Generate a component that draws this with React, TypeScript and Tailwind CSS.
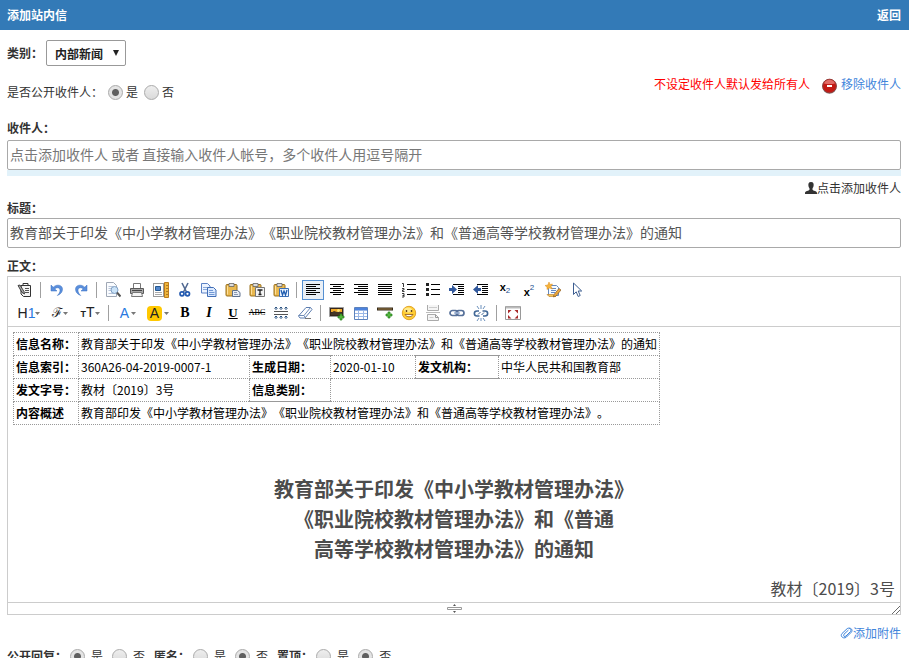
import { useState, type ReactNode } from "react";

interface ToolButtonProps {
  title: string;
  children: ReactNode;
  active?: boolean;
  width?: string;
}

function ToolButton({ title, children, active, width = "w-[22px]" }: ToolButtonProps) {
  return (
    <button
      type="button"
      title={title}
      aria-label={title}
      className={`mx-px flex h-5 shrink-0 items-center justify-center border ${width} ${
        active ? "border-[#5690d2] bg-[#e9eff6]" : "border-transparent hover:border-[#5690d2] hover:bg-[#e9eff6]"
      }`}
    >
      {children}
    </button>
  );
}

function Separator() {
  return <span className="mr-1 ml-[3px] h-4 w-px shrink-0 bg-[#a0a0a0]" />;
}

function Icon({ children }: { children: ReactNode }) {
  return (
    <svg viewBox="0 0 16 16" className="h-4 w-4 shrink-0" fill="none">
      {children}
    </svg>
  );
}

function Caret() {
  return (
    <svg viewBox="0 0 5 3" className="h-[3px] w-[5px] shrink-0" fill="#777">
      <path d="M0 0h5L2.500 3z" />
    </svg>
  );
}

function Lines({ rows }: { rows: number[][] }) {
  return (
    <Icon>
      {rows.map(([x, y, w]) => (
        <rect key={y} x={x} y={y} width={w} height="1" fill="#000" shapeRendering="crispEdges" />
      ))}
    </Icon>
  );
}

const alignLeft = [[1, 2, 14], [1, 4, 10], [1, 6, 14], [1, 8, 10], [1, 10, 14], [1, 12, 10]];
const alignCenter = [[1, 2, 14], [4, 4, 8], [1, 6, 14], [4, 8, 8], [1, 10, 14], [4, 12, 8]];
const alignRight = [[1, 2, 14], [5, 4, 10], [1, 6, 14], [5, 8, 10], [1, 10, 14], [5, 12, 10]];
const alignFull = [[1, 2, 14], [1, 4, 14], [1, 6, 14], [1, 8, 14], [1, 10, 14], [1, 12, 14]];

function UndoIcon() {
  return (
    <Icon>
      <path d="M2 3v6h6L5.800 6.900C8 5 11 5.500 11 8.300c0 2-1 3.700-2.700 5.200C11.500 12.500 13.500 10 13.500 7.200 13.500 2.800 7.800 1.800 4.200 5.200z" fill="#5b8fdc" stroke="#376fc0" strokeWidth=".5" />
    </Icon>
  );
}

function PasteIcon({ children }: { children?: ReactNode }) {
  return (
    <Icon>
      <rect x="1" y="2.500" width="11" height="11.500" rx="1" fill="#e9b84f" stroke="#9a711d" />
      <path d="M2.500 4v8.500" stroke="#ffe09a" />
      <path d="M4 1.500h5v3H4z" fill="#ddd" stroke="#666" strokeWidth=".8" />
      {children}
    </Icon>
  );
}

function IndentIcon({ out }: { out?: boolean }) {
  return (
    <Icon>
      <path
        d="M4 2.500h11M9 4.500h6M9 6.500h6M9 8.500h6M9 10.500h6M4 12.500h11"
        stroke="#000"
        shapeRendering="crispEdges"
      />
      <path d={out ? "M8 6H5V3L0 7.500 5 12V9h3z" : "M0 6h3V3l5 4.500L3 12V9H0z"} fill="#31589c" />
    </Icon>
  );
}

function PlusMark({ x, y }: { x: number; y: number }) {
  return (
    <path
      d={`M${x + 2} ${y}h2v2h2v2h-2v2h-2v-2h-2v-2h2z`}
      fill="#55b83e"
      stroke="#23801a"
      strokeWidth=".7"
    />
  );
}

function Toolbar() {
  return (
    <div className="flex flex-col gap-[3px] border-b border-[#ccc] px-[5px] py-[3px]" role="toolbar">
      <div className="flex items-center">
        <ToolButton title="HTML代码">
          <Icon>
            <path d="M4 3.500h9.500v11h-7L4 12z" fill="#f5f5f5" stroke="#333" />
            <path d="M6 3V1.500h5V3" stroke="#333" />
            <path d="M8 6.500h4M8 8.500h4M8 10.500h4" stroke="#555" />
            <path d="M1 3.500L3 3l4 6.500.500 2.500L5 10.500z" fill="#aaa" stroke="#222" strokeWidth=".8" />
          </Icon>
        </ToolButton>
        <Separator />
        <ToolButton title="后退">
          <UndoIcon />
        </ToolButton>
        <ToolButton title="前进">
          <span className="-scale-x-100">
            <UndoIcon />
          </span>
        </ToolButton>
        <Separator />
        <ToolButton title="预览">
          <Icon>
            <path d="M1.500.500h7l3 3v11h-10z" fill="#fafcff" stroke="#a0a8b5" />
            <path d="M3.500 4.500h5M3.500 6.500h3M3.500 8.500h3M3.500 11.500h5" stroke="#b9c5d8" />
            <circle cx="9.500" cy="8" r="3.500" fill="#cbe3f8" stroke="#7f9fc4" />
            <path d="M12 10.500l3.500 4" stroke="#555" strokeWidth="2" />
          </Icon>
        </ToolButton>
        <ToolButton title="打印">
          <Icon>
            <path d="M4.500 6V1.500h7V6" fill="#fff" stroke="#777" />
            <path d="M1.500 6.500h13v5h-13z" fill="#a8a8a8" stroke="#5a5a5a" />
            <path d="M3 8.500h10" stroke="#444" />
            <path d="M3.500 10.500h9l1 4h-11z" fill="#f4f4f4" stroke="#777" />
          </Icon>
        </ToolButton>
        <ToolButton title="插入模板">
          <Icon>
            <path d="M.500 1.500h10v13H.500z" fill="#fff" stroke="#333" strokeDasharray="1 1" />
            <path d="M2.500 4.500h5v4h-5z" fill="#5185cb" stroke="#24588f" />
            <path d="M2 10.500h7M2 12.500h7" stroke="#aaa" />
            <path d="M11.500.500h4v15h-4z" fill="#eeb53c" stroke="#bd7c1c" />
            <path d="M13 3.500h2M13 6.500h2M13 9.500h2M13 12.500h2" stroke="#b07a20" />
          </Icon>
        </ToolButton>
        <ToolButton title="剪切">
          <Icon>
            <path d="M5 1l4.500 9M11 1L6.500 10" stroke="#526a92" strokeWidth="1.600" />
            <circle cx="5" cy="11.800" r="2" stroke="#245ab0" strokeWidth="1.700" />
            <circle cx="10.500" cy="11.800" r="2" stroke="#245ab0" strokeWidth="1.700" />
          </Icon>
        </ToolButton>
        <ToolButton title="复制">
          <Icon>
            <path d="M.500 1.500h6l2.500 2.500v7H.500z" fill="#edf4ff" stroke="#5c82c5" />
            <path d="M2 5.500h5M2 7.500h5" stroke="#8babdc" />
            <path d="M6.500 5.500h6L15 8v6.500H6.500z" fill="#dceaff" stroke="#416eb6" />
            <path d="M8 8.500h4M8 10.500h5.500M8 12.500h5.500" stroke="#7299d4" />
          </Icon>
        </ToolButton>
        <ToolButton title="粘贴">
          <PasteIcon>
            <path d="M7.500 8.500h5l2.500 2v4H7.500z" fill="#e8edf5" stroke="#5f718d" />
            <path d="M9 10.500h3M9 12.500h4" stroke="#8b9ab2" />
          </PasteIcon>
        </ToolButton>
        <ToolButton title="粘贴为无格式文本">
          <PasteIcon>
            <path d="M6.500 5.500h9v9h-9z" fill="#f4f4f4" stroke="#777" />
            <path d="M8.500 8h5M11 8v5M9.500 12.500h3" stroke="#222" strokeWidth="1.300" />
          </PasteIcon>
        </ToolButton>
        <ToolButton title="从Word粘贴">
          <PasteIcon>
            <path d="M6.500 6.500h9v8h-9z" fill="#eaf3ff" stroke="#3c70b5" />
            <path d="M8 8l1.500 5L11 9l1.500 4L14 8" stroke="#1f5daf" strokeWidth="1.300" />
          </PasteIcon>
        </ToolButton>
        <Separator />
        <ToolButton title="左对齐" active>
          <Lines rows={alignLeft} />
        </ToolButton>
        <ToolButton title="居中">
          <Lines rows={alignCenter} />
        </ToolButton>
        <ToolButton title="右对齐">
          <Lines rows={alignRight} />
        </ToolButton>
        <ToolButton title="两端对齐">
          <Lines rows={alignFull} />
        </ToolButton>
        <ToolButton title="编号">
          <Icon>
            <path d="M6 2.500h9M6 7.500h9M6 12.500h9" stroke="#000" shapeRendering="crispEdges" />
            <path
              d="M1 1.500h1.500V5M1 6.500h2v1.500H1.500V9.500H3.500M1 11.500h2v3.500H1M1.500 13.500H3"
              stroke="#222"
              strokeWidth=".9"
            />
          </Icon>
        </ToolButton>
        <ToolButton title="项目符号">
          <Icon>
            <path d="M6 2.500h9M6 7.500h9M6 12.500h9" stroke="#000" shapeRendering="crispEdges" />
            <path d="M1 1h3v3H1zM1 6h3v3H1zM1 11h3v3H1z" fill="#222" />
          </Icon>
        </ToolButton>
        <ToolButton title="增加缩进">
          <IndentIcon />
        </ToolButton>
        <ToolButton title="减少缩进">
          <IndentIcon out />
        </ToolButton>
        <ToolButton title="下标">
          <span className="flex pb-0.5 font-[Liberation_Sans] text-[11px] leading-3 font-bold text-black">
            x<span className="pt-1 text-[8px] font-normal text-[#24508f]">2</span>
          </span>
        </ToolButton>
        <ToolButton title="上标">
          <span className="flex items-end font-[Liberation_Sans] text-[11px] leading-3 font-bold text-black">
            x<span className="pb-1 text-[8px] font-normal text-[#24508f]">2</span>
          </span>
        </ToolButton>
        <ToolButton title="一键排版">
          <Icon>
            <path d="M3.500 3.500h8l2 2v8h-10z" fill="#f7fbff" stroke="#6589bd" />
            <path d="M6 6.500h5M6 8.500h5M6 10.500h4" stroke="#658ac4" />
            <path d="M4 0l1 2.500L7.500 2 6 4.500 7.500 7 4.500 6 2 7.500 2 5 0 3.500 2.800 3z" fill="#f6b33b" stroke="#dc8f20" strokeWidth=".5" />
            <path d="M2 12.500h6l3 2H4z" fill="#f5c85a" stroke="#b97724" strokeWidth=".6" />
            <path d="M14 6.500l2 1.500-5 6-2.500 1 .5-2.500z" fill="#eda83b" stroke="#8a5b23" strokeWidth=".7" />
          </Icon>
        </ToolButton>
        <ToolButton title="全选">
          <Icon>
            <path d="M4.500 1v11.500l2.700-2.700 2 4.700 2-1-2-4.500h3.500z" fill="#fff" stroke="#3d5e91" />
          </Icon>
        </ToolButton>
      </div>

      <div className="flex items-center">
        <ToolButton title="段落" width="w-[30px]">
          <span className="font-[Liberation_Sans] text-sm leading-4 text-[#222]">
            H<span className="text-[#2878df]">1</span>
          </span>
          <Caret />
        </ToolButton>
        <ToolButton title="字体" width="w-7">
          <span className="font-[DejaVu_Serif] text-[13px] leading-4 text-[#222]">ℱ</span>
          <Caret />
        </ToolButton>
        <ToolButton title="文字大小" width="w-7">
          <span className="font-[Liberation_Sans] text-sm leading-4 text-[#222]">
            <span className="text-[9px] font-bold">T</span>T
          </span>
          <Caret />
        </ToolButton>
        <Separator />
        <ToolButton title="文字颜色" width="w-7">
          <span className="mr-0.5 font-[Liberation_Sans] text-sm leading-4 text-[#2878df]">A</span>
          <Caret />
        </ToolButton>
        <ToolButton title="文字背景" width="w-7">
          <span className="mr-0.5 h-[15px] w-[15px] shrink-0 rounded-sm bg-[#ffc800] text-center font-[Liberation_Sans] text-sm leading-[15px] text-[#222]">
            A
          </span>
          <Caret />
        </ToolButton>
        <ToolButton title="粗体">
          <span className="font-[Liberation_Serif] text-sm leading-4 font-black text-black">B</span>
        </ToolButton>
        <ToolButton title="斜体">
          <span className="font-[Liberation_Serif] text-sm leading-4 font-bold text-black italic">I</span>
        </ToolButton>
        <ToolButton title="下划线">
          <span className="font-[Liberation_Serif] text-[13px] leading-4 font-bold text-black underline">U</span>
        </ToolButton>
        <ToolButton title="删除线">
          <span className="font-[Liberation_Serif] text-[8px] leading-4 text-black line-through">ABC</span>
        </ToolButton>
        <ToolButton title="行距">
          <Icon>
            <path d="M1 6.500h14M1 9.500h14" stroke="#555" shapeRendering="crispEdges" />
            <path d="M3 2v3M8 2v3M13 2v3M3 11v3M8 11v3M13 11v3" stroke="#2b5382" />
            <path d="M1.500 3.500L3 2l1.500 1.500M6.500 3.500L8 2l1.500 1.500M11.500 3.500L13 2l1.500 1.500M1.500 12.500L3 11l1.500 1.500M6.500 12.500L8 11l1.500 1.500M11.500 12.500L13 11l1.500 1.500" stroke="#2b5382" />
          </Icon>
        </ToolButton>
        <ToolButton title="删除格式">
          <Icon>
            <path d="M9 2.500h4.500l1.500 2-7 8.500H3L1.500 11z" fill="#fff" stroke="#5c7db0" />
            <path d="M1.500 10.500h5.500L8.500 13M7 10.500l6.500-8" stroke="#6f8db8" />
            <path d="M8 13.500h6" stroke="#777" />
          </Icon>
        </ToolButton>
        <Separator />
        <ToolButton title="图片">
          <Icon>
            <path d="M.500 2.500h14v9H.500z" fill="#35261d" stroke="#9c9c9c" />
            <path d="M2 4h11v3H2z" fill="#f1aa2b" />
            <path d="M2 8l3-2 3 1 2-1 3 2v2H2z" fill="#453526" />
            <circle cx="9.500" cy="5.500" r="1.500" fill="#ffe576" />
            <PlusMark x={9} y={9} />
          </Icon>
        </ToolButton>
        <ToolButton title="表格">
          <Icon>
            <path d="M1.500 2.500h13v12h-13z" fill="#fff" stroke="#5c82bc" />
            <path d="M2 3h12v2H2z" fill="#4c83dd" />
            <path d="M2 5.500h12M2 8.500h12M2 11.500h12M5.500 5v9M10.500 5v9" stroke="#9bb8e7" />
          </Icon>
        </ToolButton>
        <ToolButton title="插入横线">
          <Icon>
            <path d="M0 2.500h16v3H0z" fill="#352918" />
            <path d="M1 4h14" stroke="#a3824a" />
            <PlusMark x={9} y={7} />
          </Icon>
        </ToolButton>
        <ToolButton title="插入表情">
          <Icon>
            <circle cx="8" cy="8" r="6.700" fill="#ffcd33" stroke="#e3a52a" />
            <ellipse cx="7" cy="5" rx="4" ry="2.500" fill="#ffea8c" />
            <path d="M5.500 5v2M10.500 5v2" stroke="#67451a" strokeWidth="1.400" />
            <path d="M4 9.500c1.500 3 6.500 3 8 0z" fill="#fff" stroke="#8e571c" strokeWidth=".8" />
          </Icon>
        </ToolButton>
        <ToolButton title="插入分页符">
          <Icon>
            <path d="M2.500 0v5.500h11V0M2.500 15.500v-6h8l3 3v3z" fill="#f5f5f5" stroke="#aaa" />
            <path d="M4 2.500h8M4.500 12.500h4" stroke="#ccc" />
            <path d="M1 7.500h14" stroke="#bbb" />
            <path d="M10.500 9.500v3h3" stroke="#999" />
          </Icon>
        </ToolButton>
        <ToolButton title="超级链接">
          <Icon>
            <rect x="1" y="5.500" width="8" height="5" rx="2.500" stroke="#567099" strokeWidth="1.700" />
            <rect x="7" y="5.500" width="8" height="5" rx="2.500" stroke="#567099" strokeWidth="1.700" />
            <path d="M5 8h6" stroke="#9fb4d6" strokeWidth="1.500" />
          </Icon>
        </ToolButton>
        <ToolButton title="取消超级链接">
          <Icon>
            <path d="M6 6H4C.500 6 .500 11 4 11h2.500M9.500 6H12c3.500 0 3.500 5 0 5h-2" stroke="#416796" strokeWidth="1.600" />
            <path d="M5 9.500L7.500 7M8.500 10L11 7.500" stroke="#416796" />
            <path d="M4 1l2 3M8 0v4M12 1l-2 3M4 16l2-3M8 16v-3M12 16l-2-3" stroke="#4675ab" strokeWidth=".8" />
          </Icon>
        </ToolButton>
        <Separator />
        <ToolButton title="全屏显示">
          <Icon>
            <path d="M.500 1.500h15v13H.500z" fill="#fff" stroke="#999" />
            <path d="M1 2.500h14" stroke="#bbb" strokeWidth="2" />
            <path d="M3 5h3.500L3 8.500zM13 5v3.500L9.500 5zM3 13.500V10l3.500 3.500zM13 13.500H9.500L13 10z" fill="#a82b2b" />
          </Icon>
        </ToolButton>
      </div>
    </div>
  );
}

const cell = "h-[23px] border border-dotted border-[#999] px-0.5 py-0 text-left";

function InfoTable() {
  return (
    <table className="w-[647px] table-fixed border-collapse text-xs leading-5 text-black">
      <colgroup>
        <col className="w-[65px]" />
        <col className="w-[171px]" />
        <col className="w-[81px]" />
        <col className="w-[85px]" />
        <col className="w-[83px]" />
        <col />
      </colgroup>
      <tbody>
        <tr>
          <th className={cell}>信息名称：</th>
          <td className={`${cell} whitespace-nowrap`} colSpan={5}>
            教育部关于印发《中小学教材管理办法》《职业院校教材管理办法》和《普通高等学校教材管理办法》的通知
          </td>
        </tr>
        <tr>
          <th className={cell}>信息索引：</th>
          <td className={cell}>360A26-04-2019-0007-1</td>
          <th className={`${cell} [border-top-style:solid]`}>生成日期：</th>
          <td className={cell}>2020-01-10</td>
          <th className={`${cell} [border-top-style:solid] [border-bottom-style:solid]`}>发文机构：</th>
          <td className={cell}>中华人民共和国教育部</td>
        </tr>
        <tr>
          <th className={cell}>发文字号：</th>
          <td className={cell}>教材〔2019〕3号</td>
          <th className={`${cell} [border-bottom-style:solid]`}>信息类别：</th>
          <td className={cell} colSpan={3}></td>
        </tr>
        <tr>
          <th className={cell}>内容概述</th>
          <td className={cell} colSpan={5}>
            教育部印发《中小学教材管理办法》《职业院校教材管理办法》和《普通高等学校教材管理办法》。
          </td>
        </tr>
      </tbody>
    </table>
  );
}

interface YesNoProps {
  name: string;
  label: string;
  value: boolean;
  onChange: (value: boolean) => void;
  compact?: boolean;
}

function YesNo({ name, label, value, onChange, compact }: YesNoProps) {
  const radio =
    "h-[15px] w-[15px] shrink-0 appearance-none rounded-full border border-[#aaa] bg-linear-to-b from-[#eee] to-[#dadada] checked:bg-[radial-gradient(circle,#606060_3px,#e4e4e4_4px)]";
  const option = compact ? "flex items-center gap-[3px]" : "flex items-center gap-1.5";

  return (
    <div role="radiogroup" aria-label={label} className={compact ? "flex items-center gap-[5px]" : "flex items-center gap-[3px]"}>
      <span className={compact ? "" : "font-bold"}>{label}</span>
      <div className={compact ? "flex gap-1.5" : "flex gap-[9px]"}>
        <label className={option}>
          <input type="radio" name={name} className={radio} checked={value} onChange={() => onChange(true)} />是
        </label>
        <label className={option}>
          <input type="radio" name={name} className={radio} checked={!value} onChange={() => onChange(false)} />否
        </label>
      </div>
    </div>
  );
}

export default function App() {
  const [category, setCategory] = useState("内部新闻");
  const [showReceivers, setShowReceivers] = useState(true);
  const [receivers, setReceivers] = useState("");
  const [title, setTitle] = useState(
    "教育部关于印发《中小学教材管理办法》《职业院校教材管理办法》和《普通高等学校教材管理办法》的通知"
  );
  const [publicReply, setPublicReply] = useState(true);
  const [anonymous, setAnonymous] = useState(false);
  const [pinned, setPinned] = useState(false);

  const textInput =
    "block h-[30px] w-full rounded-xs border border-[#a9a9a9] px-0.5 pb-0.5 text-sm text-[#555] outline-none placeholder:text-[#777]";

  return (
    <div className="h-screen overflow-y-auto bg-white font-['Noto_Sans_CJK_SC',sans-serif] text-xs leading-5 text-[#333] [scrollbar-width:none] [text-spacing-trim:space-all]">
      <header className="flex h-[30px] items-center justify-between bg-[#337ab7] px-2 pl-[7px] font-bold text-white">
        <h1>添加站内信</h1>
        <a href="#back">返回</a>
      </header>

      <form className="pr-2 pl-[7px]" onSubmit={(e) => e.preventDefault()}>
        <div className="flex items-center gap-[3px] pt-[10px] font-bold">
          <label htmlFor="category">类别：</label>
          <div className="relative">
            <select
              id="category"
              value={category}
              onChange={(e) => setCategory(e.target.value)}
              className="block h-[26px] w-20 appearance-none rounded-xs border border-[#999] bg-white pt-0.5 pl-2 font-bold text-[#222]"
            >
              <option>内部新闻</option>
              <option>通知公告</option>
            </select>
            <svg viewBox="0 0 6 6" className="pointer-events-none absolute top-2.5 right-[7px] h-1.5 w-1.5" fill="#222">
              <path d="M0 0h6L3 6z" />
            </svg>
          </div>
        </div>

        <div className="flex items-start justify-between pt-2">
          <div className="pt-2">
            <YesNo name="show" label="是否公开收件人：" value={showReceivers} onChange={setShowReceivers} compact />
          </div>
          <div className="flex items-center">
            <span className="mr-3 text-[#f00]">不设定收件人默认发给所有人</span>
            <a href="#remove" className="flex items-center gap-1 text-[#3f85db]">
              <svg viewBox="0 0 15 16" className="mt-1 h-4 w-[15px]">
                <circle cx="7.500" cy="8.500" r="7.300" fill="#888" />
                <circle cx="7.500" cy="8" r="6.800" fill="#c31a14" stroke="#973a37" />
                <path d="M2 5.500c1.500-5 9.500-5 11 0-3 .800-8 .800-11 0z" fill="#e16c67" />
                <path d="M5 7h5v2H5z" fill="#fff" />
              </svg>
              移除收件人
            </a>
          </div>
        </div>

        <label htmlFor="receivers" className="block pt-4 pb-0.5 font-bold">
          收件人：
        </label>
        <div className="border-b-[6px] border-[#e2f2fa]">
          <input
            id="receivers"
            type="text"
            value={receivers}
            onChange={(e) => setReceivers(e.target.value)}
            placeholder="点击添加收件人 或者 直接输入收件人帐号，多个收件人用逗号隔开"
            className={textInput}
          />
        </div>
        <div className="flex justify-end pt-0.5">
          <button type="button" className="flex items-center">
            <svg viewBox="0 0 12 12" className="h-3 w-3" fill="#333">
              <path d="M6 0C3.500 0 3 2 3.500 4.300 3.700 5.500 4.300 6 4.500 6.500v1.200C4 8.700 0 8.800 0 11v1h12v-1c0-2.200-4-2.300-4.500-3.300V6.500c.2-.5.800-1 1-2.200C9 2 8.500 0 6 0z" />
            </svg>
            点击添加收件人
          </button>
        </div>

        <label htmlFor="title" className="block font-bold">
          标题：
        </label>
        <input id="title" type="text" value={title} onChange={(e) => setTitle(e.target.value)} className={textInput} />

        <div id="body-label" className="pt-2 font-bold">
          正文：
        </div>
        <div className="border border-[#ccc]">
          <Toolbar />
          <div
            contentEditable
            suppressContentEditableWarning
            role="textbox"
            aria-labelledby="body-label"
            className="px-[5px] pt-[5px] text-[#4c4c4c] outline-none"
          >
            <InfoTable />
            <h2 className="pt-[49px] text-center text-xl leading-[30px] font-bold">
              教育部关于印发《中小学教材管理办法》
              <br />
              《职业院校教材管理办法》和《普通
              <br />
              高等学校教材管理办法》的通知
            </h2>
            <p className="pt-3 pb-0.5 text-right text-base leading-6">教材〔2019〕3号</p>
          </div>
          <div className="flex h-3 items-center border-t border-[#ccc]">
            <span className="w-2" />
            <svg viewBox="0 0 15 9" className="mx-auto h-[9px] w-[15px]" fill="none">
              <path d="M.500 3.500h14v2H.500z" fill="#fff" stroke="#999" />
              <path d="M6 2l1.500-2L9 2zM6 7h3L7.500 9z" fill="#555" />
            </svg>
            <svg viewBox="0 0 8 8" className="h-2 w-2 self-end" stroke="#444">
              <path d="M0 8l8-8M4 8l4-4" strokeWidth=".8" />
            </svg>
          </div>
        </div>

        <div className="flex justify-end pt-2">
          <a href="#attach" className="flex items-center text-[#3f85db]">
            <svg viewBox="0 0 13 12" className="h-3 w-[13px]" fill="none" stroke="currentColor">
              <path d="M11.500 5L6.500 10C4 12.500-.500 9.500 2 6.500L7 1.800C9 0 12 2 10.500 4.500L6 9C4.500 10.300 2.800 9 4 7.200L8.500 3" />
              <path d="M9 1.500C11 .500 13 3 11.500 5" />
            </svg>
            添加附件
          </a>
        </div>

        <div className="flex gap-[9px] pt-[3px] pb-6">
          <YesNo name="reply" label="公开回复：" value={publicReply} onChange={setPublicReply} />
          <YesNo name="anonymous" label="匿名：" value={anonymous} onChange={setAnonymous} />
          <YesNo name="pinned" label="置顶：" value={pinned} onChange={setPinned} />
        </div>
      </form>
    </div>
  );
}
